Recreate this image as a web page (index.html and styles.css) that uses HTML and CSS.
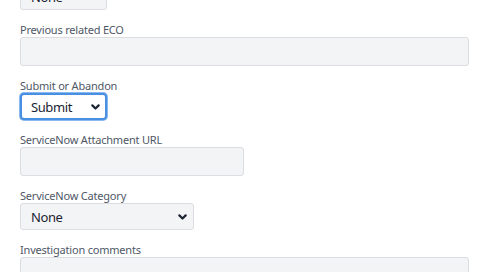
FILE: index.html
```html
<!DOCTYPE html>
<html lang="en">
<head>
  <meta charset="UTF-8" />
  <meta name="viewport" content="width=device-width, initial-scale=1.0" />
  <title>ECO Form</title>
  <link rel="stylesheet" href="styles.css">
</head>
<body>
  <form class="eco-form">
    <div class="field">
      <label>Priority</label>
      <div class="select-wrap small">
        <select><option>None</option></select>
        <svg class="chevron" viewBox="0 0 10 6" width="9" height="6"><path d="M1.5 1.2l3.5 3.5 3.5-3.5" /></svg>
      </div>
    </div>

    <div class="field">
      <label>Previous related ECO</label>
      <input type="text" class="text-input wide">
    </div>

    <div class="field">
      <label>Submit or Abandon</label>
      <div class="select-wrap small is-focused">
        <select><option>Submit</option><option>Abandon</option></select>
        <svg class="chevron" viewBox="0 0 10 6" width="9" height="6"><path d="M1.5 1.2l3.5 3.5 3.5-3.5" /></svg>
      </div>
    </div>

    <div class="field">
      <label>ServiceNow Attachment URL</label>
      <input type="text" class="text-input medium">
    </div>

    <div class="field">
      <label>ServiceNow Category</label>
      <div class="select-wrap category">
        <select><option>None</option></select>
        <svg class="chevron" viewBox="0 0 10 6" width="9" height="6"><path d="M1.5 1.2l3.5 3.5 3.5-3.5" /></svg>
      </div>
    </div>

    <div class="field">
      <label>Investigation comments</label>
      <textarea class="text-input wide" rows="3"></textarea>
    </div>
  </form>
</body>
</html>
```

FILE: styles.css
```css
body {
  margin: 0;
  background: #fff;
  font-family: "Noto Sans", Arial, sans-serif;
  color: #1f2a3a;
}

.eco-form {
  display: flex;
  flex-direction: column;
  gap: 12px;
  padding: 0 20px;
  margin-top: -32px;
}

.field {
  display: flex;
  flex-direction: column;
  align-items: flex-start;
}

.field label {
  font-size: 11px;
  line-height: 15px;
  letter-spacing: -0.2px;
  color: #4f5866;
}

.text-input {
  box-sizing: border-box;
  height: 29px;
  margin: 0;
  padding: 4px 8px;
  background: #f3f4f6;
  border: 1px solid #dcdde3;
  border-radius: 3px;
  font: inherit;
  resize: none;
}

.text-input.wide {
  width: 449px;
}

.text-input.medium {
  width: 224px;
}

textarea.text-input {
  height: 60px;
}

.select-wrap {
  position: relative;
  box-sizing: border-box;
  height: 27px;
}

.select-wrap.small {
  width: 87px;
}

.select-wrap.category {
  width: 174px;
}

.select-wrap select {
  appearance: none;
  -webkit-appearance: none;
  box-sizing: border-box;
  width: 100%;
  height: 100%;
  margin: 0;
  padding: 0 24px 0 10px;
  background: #f3f4f6;
  border: 1px solid #dcdde3;
  border-radius: 3px;
  font-family: inherit;
  font-size: 13px;
  letter-spacing: -0.4px;
  color: #1b2433;
}

.select-wrap.is-focused select {
  background: #fff;
  border: 2px solid #4a90e2;
  border-radius: 4px;
  box-shadow: 0 0 0 1px #8bb8ef;
  padding-left: 9px;
}

.chevron {
  position: absolute;
  right: 7px;
  top: 11px;
  fill: none;
  stroke: #1b2433;
  stroke-width: 2.4;
  stroke-linecap: round;
  stroke-linejoin: round;
  pointer-events: none;
}
```
